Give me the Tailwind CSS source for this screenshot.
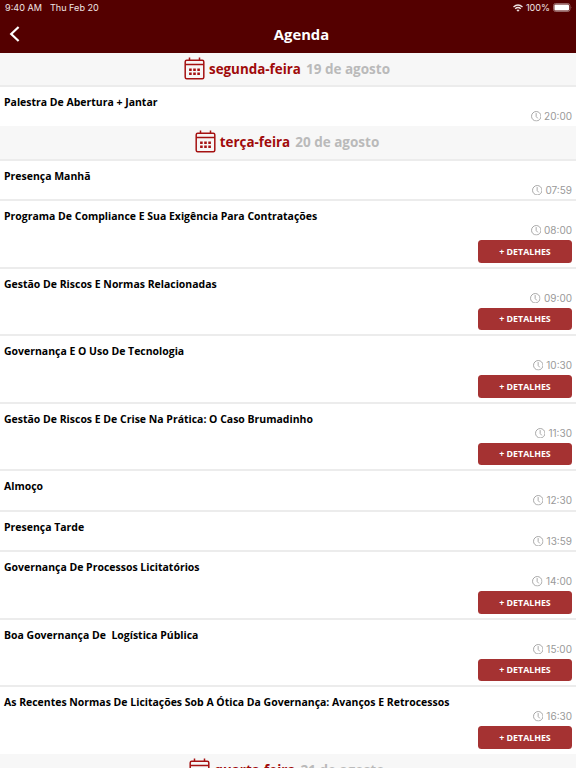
<!DOCTYPE html>
<html lang="pt-BR">
<head>
    <meta charset="UTF-8">
    <meta name="viewport" content="width=device-width, initial-scale=1.0">
    <title>Agenda</title>
    <script src="https://cdn.jsdelivr.net/npm/@tailwindcss/browser@4"></script>
</head>
<body class="h-screen overflow-hidden bg-white font-['Open_Sans',sans-serif]">
    <!-- Icons -->
    <svg class="hidden">
        <symbol id="calendar" viewBox="0 0 20 23">
            <g fill="none" stroke="currentColor" stroke-width="1.5">
                <rect x="0.7" y="3.2" width="18.6" height="18.6" rx="1.5"/>
                <path d="M0.7 7.4H19.3M5 0.4V4M15 0.4V4"/>
            </g>
            <path fill="currentColor" d="M4.6 11.4h2.6v2.5H4.6zM8.7 11.4h2.6v2.5H8.7zM12.8 11.4h2.6v2.5h-2.6zM4.6 15.5h2.6V18H4.6zM8.7 15.5h2.6V18H8.7zM12.8 15.5h2.6V18h-2.6z"/>
        </symbol>
        <symbol id="clock" viewBox="0 0 10 10">
            <g fill="none" stroke="currentColor" stroke-width="0.8">
                <circle cx="5" cy="5" r="4.5"/>
                <path d="M4.9 2V5.2L6.4 7"/>
            </g>
        </symbol>
    </svg>

    <!-- Header -->
    <header class="h-[52.5px] bg-[#540000] text-white">
        <div class="flex h-4 items-center justify-between pr-1 pl-[5px] font-['Inter',sans-serif] text-[9.1px] text-[#f0e4e4]">
            <div class="flex gap-2">
                <span>9:40 AM</span>
                <span>Thu Feb 20</span>
            </div>
            <div class="flex items-center gap-[3px]">
                <svg class="h-2 w-[10px]" viewBox="0 0 10 8" fill="none" stroke="currentColor" stroke-width="1.4">
                    <path d="M0.5 3Q5 -1.2 9.5 3M2.2 4.8Q5 2.3 7.8 4.8"/>
                    <path fill="currentColor" stroke="none" d="M3.4 6Q5 4.8 6.6 6L5 7.7z"/>
                </svg>
                <span>100%</span>
                <svg class="h-[9px] w-[19px]" viewBox="0 0 19 9">
                    <rect x="0.5" y="0.5" width="16.4" height="8" rx="2" fill="none" stroke="#a77f7f" stroke-width="0.8"/>
                    <rect x="1.4" y="1.4" width="14.6" height="6.2" rx="1" fill="#fff"/>
                    <path d="M17.8 3.2Q19 4.5 17.8 5.8z" fill="#a77f7f"/>
                </svg>
            </div>
        </div>
        <div class="grid h-9 grid-cols-[27px_1fr] items-center">
            <svg class="ml-[9px] h-4 w-[11px]" viewBox="0 0 11 16" fill="none" stroke="currentColor" stroke-width="2.2">
                <path d="M9.6 1L2.2 8L9.6 15"/>
            </svg>
            <h1 class="pt-px text-center text-[14.8px] font-bold">Agenda</h1>
        </div>
    </header>

    <!-- Agenda list, filled in below -->
    <main id="agenda"></main>

    <script>
        const days = [
            { weekday: 'segunda-feira', date: '19 de agosto', items: [
                { title: 'Palestra De Abertura + Jantar', time: '20:00' }
            ] },
            { weekday: 'terça-feira', date: '20 de agosto', items: [
                { title: 'Presença Manhã', time: '07:59' },
                { title: 'Programa De Compliance E Sua Exigência Para Contratações', time: '08:00', details: true },
                { title: 'Gestão De Riscos E Normas Relacionadas', time: '09:00', details: true },
                { title: 'Governança E O Uso De Tecnologia', time: '10:30', details: true },
                { title: 'Gestão De Riscos E De Crise Na Prática: O Caso Brumadinho', time: '11:30', details: true },
                { title: 'Almoço', time: '12:30' },
                { title: 'Presença Tarde', time: '13:59' },
                { title: 'Governança De Processos Licitatórios', time: '14:00', details: true },
                { title: 'Boa Governança De &nbsp;Logística Pública', time: '15:00', details: true },
                { title: 'As Recentes Normas De Licitações Sob A Ótica Da Governança: Avanços E Retrocessos', time: '16:30', details: true }
            ] },
            { weekday: 'quarta-feira', date: '21 de agosto', items: [] }
        ];

        const button = `
            <button class="mt-[4.2px] block h-[22.5px] w-[94px] rounded-[3.5px] bg-[#a53232] pt-px text-[8.8px] font-bold text-white">+ DETALHES</button>`;

        document.getElementById('agenda').innerHTML = days.map(day => `
            <section>
                <h2 class="flex h-[34.5px] items-center justify-center border-b-2 border-[#ececec] bg-[#f7f7f7] pr-[2px] text-[13.5px] font-bold text-[#bababa]">
                    <svg class="mr-1 mb-px h-[23px] w-[21px] text-[#a51212]"><use href="#calendar"/></svg>
                    <span class="mr-[5px] text-[13.4px] text-[#a00a0a]">${day.weekday}</span>
                    <span>${day.date}</span>
                </h2>
                <ul>
                    ${day.items.map(item => `
                    <li class="${item.details ? 'h-[67.5px] last:h-[66.5px]' : 'h-[40.5px] last:h-[39px]'} border-b-2 border-[#ececec] px-1 pt-[8.3px] last:border-b-0">
                        <h3 class="h-[15px] text-[10.47px] leading-[15px] font-bold whitespace-nowrap text-black">${item.title}</h3>
                        <div class="flex flex-col items-end">
                            <div class="flex h-3 items-center gap-[3px] font-['Inter',sans-serif] text-[10px] leading-3 text-[#999]">
                                <svg class="size-[10.5px]"><use href="#clock"/></svg>
                                <span>${item.time}</span>
                            </div>
                            ${item.details ? button : ''}
                        </div>
                    </li>`).join('')}
                </ul>
            </section>`).join('');
    </script>
</body>
</html>
